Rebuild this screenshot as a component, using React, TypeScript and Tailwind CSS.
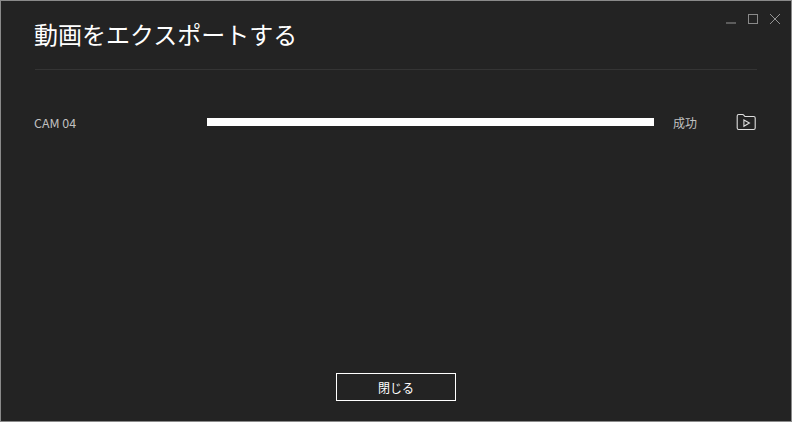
const FONT = "font-['Noto_Sans_CJK_JP','Noto_Sans',sans-serif]";

function WindowControls() {
  return (
    <div className="mt-[13px] mr-[11px] flex h-[10px] gap-3">
      <button aria-label="Minimize" className="flex h-[10px] w-[10px] items-end">
        <span className="block h-[2px] w-[10px] bg-[#5c5c5c]" />
      </button>
      <button aria-label="Maximize" className="h-[10px] w-[10px] border border-[#8a8a8a]" />
      <button aria-label="Close" className="h-[10px] w-[10px]">
        <svg width="10" height="10" viewBox="0 0 10 10" className="block" stroke="#a0a0a0" strokeWidth="0.9">
          <path d="M0 0L10 10M10 0L0 10" />
        </svg>
      </button>
    </div>
  );
}

function FolderPlayIcon() {
  return (
    <svg width="20" height="18" viewBox="0 0 20 18" className="block" fill="none" stroke="#dedede" strokeWidth="1.1" strokeLinejoin="round">
      <path d="M1.2 15V3Q1.2 1.500 2.700 1.500H6.500Q7.400 1.500 8 2.300L8.900 3.500H17.700Q19.200 3.500 19.200 5V15Q19.200 16.500 17.700 16.500H2.700Q1.200 16.500 1.200 15Z" />
      <path d="M7.900 7V13.200L13.400 10.100Z" strokeLinejoin="miter" />
    </svg>
  );
}

export default function App() {
  return (
    <div className={`flex h-[422px] w-[792px] flex-col border border-[#8a8a8a] bg-[#232323] ${FONT}`}>
      <header className="flex h-[68px] items-start justify-between">
        <h1 className="mt-[15px] ml-[33px] text-[24px] leading-[36px] whitespace-nowrap text-white">動画をエクスポートする</h1>
        <WindowControls />
      </header>
      <div className="mr-[34px] ml-[34px] h-px shrink-0 bg-[#343434]" />
      <main className="mt-[43px] flex h-[18px] items-center text-[12px] leading-[18px] text-[#c0c0c0]">
        <span className="ml-[33px] w-[173px] pt-[2px] text-[12.4px]">CAM 04</span>
        <div className="h-2 w-[447px] bg-white" />
        <span className="ml-[19px] w-[63px] pt-[2px]">成功</span>
        <button aria-label="Open folder">
          <FolderPlayIcon />
        </button>
      </main>
      <footer className="mt-auto mb-[20px] flex justify-center">
        <button className="h-[28px] w-[120px] border border-white pt-[2px] text-[12px] leading-[24px] text-white">閉じる</button>
      </footer>
    </div>
  );
}
